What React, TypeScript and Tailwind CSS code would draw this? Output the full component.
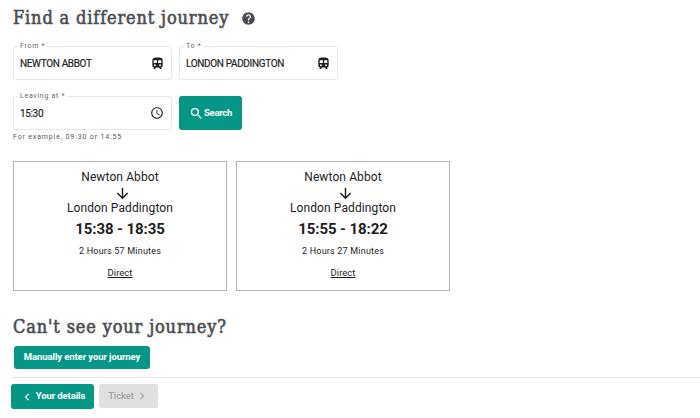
import type { ReactNode } from "react";
import {
  MdAccessTime,
  MdArrowDownward,
  MdChevronLeft,
  MdChevronRight,
  MdHelp,
  MdSearch,
} from "react-icons/md";

const journeys = [
  { from: "Newton Abbot", to: "London Paddington", times: "15:38 - 18:35", duration: "2 Hours 57 Minutes" },
  { from: "Newton Abbot", to: "London Paddington", times: "15:55 - 18:22", duration: "2 Hours 27 Minutes" },
];

function TrainIcon() {
  return (
    <svg viewBox="0 0 24 24" className="h-[13px] w-[13px]" fill="currentColor">
      <path
        fillRule="evenodd"
        d="M12 1C7 1 2.500 1.500 2.500 6v10A3.500 3.500 0 0 0 6 19.500L4 22h3.200l2.300-2.500h5l2.300 2.500H20l-2-2.500a3.500 3.500 0 0 0 3.500-3.500V6C21.500 1.500 17 1 12 1zM5 6h5.800v5H5zM13.200 6H19v5h-5.800zM7.300 13.500a1.700 1.700 0 1 1 0 3.400 1.700 1.700 0 0 1 0-3.400zM16.700 13.500a1.700 1.700 0 1 1 0 3.400 1.700 1.700 0 0 1 0-3.400z"
      />
    </svg>
  );
}

function Field({ label, value, icon }: { label: string; value: string; icon: ReactNode }) {
  return (
    <div className="relative flex h-[34px] w-[159px] items-center justify-between rounded-[3px] border border-[#e6e6e6] pr-[7px] pl-[6px] text-[#1f1f1f]">
      <span className="absolute -top-[5px] left-[4px] bg-white px-[2px] text-[7px] leading-[9px] tracking-[0.7px] text-[#666]">
        {label}
      </span>
      <span className="mt-[2px] text-[10px] leading-[12px] tracking-[-0.35px] [-webkit-text-stroke:0.2px]">{value}</span>
      {icon}
    </div>
  );
}

function JourneyCard({ journey }: { journey: (typeof journeys)[number] }) {
  return (
    <article className="flex h-[130px] w-[214px] flex-col items-center border border-[#b4b4b4] pt-[7px] text-[#1c1c1c]">
      <p className="text-[12px] leading-[16px] tracking-[0.1px]">{journey.from}</p>
      <MdArrowDownward className="ml-[4px] h-[17px] w-[17px]" />
      <p className="text-[12px] leading-[13px] tracking-[0.1px]">{journey.to}</p>
      <p className="mt-[5px] text-[15px] leading-[19px] font-bold tracking-[-0.1px]">{journey.times}</p>
      <p className="mt-[6px] text-[9px] leading-[12px] tracking-[0.2px]">{journey.duration}</p>
      <a className="mt-[10px] text-[9.5px] leading-[12px] underline">Direct</a>
    </article>
  );
}

export default function App() {
  return (
    <main className="h-[418px] w-[700px] overflow-hidden bg-white pt-[6px] font-['Roboto',sans-serif]">
      <header className="flex h-[24px] items-center pl-[13px] text-[#4b4d52]">
        <h1 className="w-[228px] font-['DejaVu_Serif',serif] text-[18px] leading-[22px] tracking-[0.85px] whitespace-nowrap [-webkit-text-stroke:0.6px] [font-stretch:condensed]">
          Find a different journey
        </h1>
        <MdHelp className="mt-px h-[15px] w-[15px]" />
      </header>

      <section className="mt-[16px] flex gap-[7px] pl-[13px]">
        <Field label="From *" value="NEWTON ABBOT" icon={<TrainIcon />} />
        <Field label="To *" value="LONDON PADDINGTON" icon={<TrainIcon />} />
      </section>

      <section className="mt-[16px] flex gap-[7px] pl-[13px]">
        <div>
          <Field label="Leaving at *" value="15:30" icon={<MdAccessTime className="h-[14px] w-[14px]" />} />
          <p className="mt-[3px] text-[7px] leading-[9px] tracking-[0.85px] text-[#555]">For example, 09:30 or 14:55</p>
        </div>
        <button className="flex h-[34px] w-[63px] items-center justify-center rounded-[3px] bg-[#059686] text-[9.5px] font-bold tracking-[-0.3px] text-white">
          <MdSearch className="h-[15px] w-[15px]" />
          Search
        </button>
      </section>

      <section className="mt-[19px] flex gap-[9px] pl-[13px]">
        {journeys.map((journey) => (
          <JourneyCard journey={journey} key={journey.times} />
        ))}
      </section>

      <section className="mt-[24px] pl-[13px]">
        <h2 className="font-['DejaVu_Serif',serif] text-[18px] leading-[24px] tracking-[0.85px] whitespace-nowrap text-[#4b4d52] [-webkit-text-stroke:0.6px] [font-stretch:condensed]">
          Can't see your journey?
        </h2>
        <button className="mt-[7px] ml-[1px] flex h-[23px] w-[136px] items-center justify-center rounded-[3px] bg-[#059686] text-[9.5px] font-bold tracking-[-0.1px] text-white">
          Manually enter your journey
        </button>
      </section>

      <footer className="mt-[8px] ml-[12px] border-t border-[#e4e4e4] pt-[6px]">
        <div className="-ml-px flex gap-[5px] text-[9.5px] font-bold tracking-[-0.1px]">
          <button className="flex h-[25px] w-[83px] items-center justify-center gap-[2px] rounded-[3px] bg-[#059686] text-white">
            <MdChevronLeft className="h-[14px] w-[14px]" />
            Your details
          </button>
          <button className="flex h-[24px] w-[59px] items-center justify-center rounded-[3px] bg-[#e0e0e0] font-medium text-[#a2a2a2]">
            Ticket
            <MdChevronRight className="ml-px h-[14px] w-[14px]" />
          </button>
        </div>
      </footer>
    </main>
  );
}
